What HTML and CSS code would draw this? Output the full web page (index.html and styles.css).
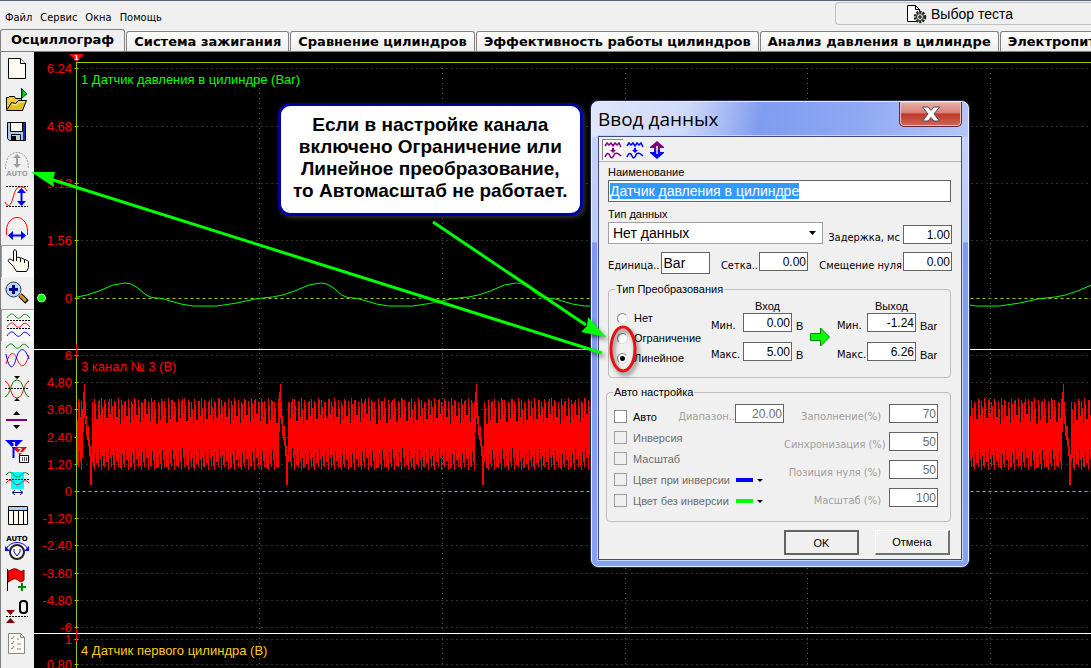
FILE: index.html
```html
<!DOCTYPE html>
<html lang="ru">
<head>
    <meta charset="UTF-8">
    <meta name="viewport" content="width=device-width, initial-scale=1.0">
    <title>Осциллограф</title>
    <link rel="stylesheet" href="styles.css">
</head>
<body>
    <header class="menubar">
        <nav class="menu">
            <a href="#">Файл</a>
            <a href="#">Сервис</a>
            <a href="#">Окна</a>
            <a href="#">Помощь</a>
        </nav>
        <button class="test-select" type="button">
            <svg width="22" height="20" viewBox="0 0 22 20">
                <path d="M1.500 1.500h8l4 4v12h-12z" fill="#fff" stroke="#000"/>
                <path d="M9.500 1.500v4h4" fill="none" stroke="#000"/>
                <circle cx="14" cy="13" r="5" fill="#b9cdb9" stroke="#222" stroke-width="2.500" stroke-dasharray="2 1.200"/>
                <circle cx="14" cy="13" r="3.500" fill="#cfe0cf" stroke="#333"/>
                <path d="M14 11v4M12 13h4" stroke="#000"/>
            </svg>
            <span>Выбор теста</span>
        </button>
    </header>

    <nav class="tabs">
        <a class="tab active" href="#">Осциллограф</a>
        <a class="tab" href="#">Система зажигания</a>
        <a class="tab" href="#">Сравнение цилиндров</a>
        <a class="tab" href="#">Эффективность работы цилиндров</a>
        <a class="tab" href="#">Анализ давления в цилиндре</a>
        <a class="tab" href="#">Электропитание</a>
    </nav>

    <main class="workspace">
        <div class="toolbar">
            <button type="button" aria-label="Новый">
                <svg viewBox="0 0 32 32"><path d="M7.500 5.500h12l5 5v15h-17z" fill="#fffaf0" stroke="#000"/><path d="M19.500 5.500v5h5" fill="#fff" stroke="#000"/></svg>
            </button>
            <button type="button" aria-label="Открыть">
                <svg viewBox="0 0 32 32"><path d="M5.500 24.500v-12h2l1-1h5l1 2h6v4" fill="#e8cf2a" stroke="#000"/><path d="M5.500 25.500l5-8 4 1 3-3h8l-4 10z" fill="#e0c020" stroke="#000"/><path d="M11 19l4 1 3-3h6" fill="none" stroke="#fff7a0"/><path d="M20.500 3v11" stroke="#000"/><path d="M21 4l5 5-5 4z" fill="#0c0" stroke="#063"/></svg>
            </button>
            <button type="button" aria-label="Сохранить">
                <svg viewBox="0 0 32 32"><path d="M6.500 5.500h18v18h-16l-2-2z" fill="#a8c8f0" stroke="#000"/><path d="M9.500 5.500h12v9h-12z" fill="#fffaf0" stroke="#000"/><path d="M22 6h2v17h-2z" fill="#22a"/><path d="M10.500 17.500h9v6h-9z" fill="#ccc" stroke="#000"/><path d="M11 19h4v4h-4z" fill="#000"/></svg>
            </button>
            <button type="button" aria-label="Автомасштаб">
                <svg viewBox="0 0 32 32"><g fill="none" stroke="#a0a0a0"><path d="M4.500 20C4.500 8 10 3.500 16 3.500S27.500 8 27.500 20" stroke-dasharray="2 1"/><path d="M16 7v10" stroke-width="2"/></g><path d="M12 9l4-4 4 4zM12 15l4 4 4-4z" fill="#a0a0a0"/><text x="16" y="27" class="mini gray">AUTO</text></svg>
            </button>
            <button type="button" aria-label="Масштаб по вертикали">
                <svg viewBox="0 0 32 32"><path d="M5 5.500h22M5 25.500h22" stroke="#000" stroke-dasharray="2 1"/><path d="M4 21c3 6 6 4 8-4s4-12 9-11c3 0 4 2 5 4" fill="none" stroke="red"/><path d="M20.500 9v14" stroke="#00f" stroke-width="2"/><path d="M16 12l4.500-5 4.500 5zM16 20l4.500 5 4.500-5z" fill="#00f"/></svg>
            </button>
            <button type="button" aria-label="Масштаб по горизонтали">
                <svg viewBox="0 0 32 32"><path d="M5.500 22V17C6 9 11 4.500 16 4.500S26 9 26.500 17v5" fill="none" stroke="red"/><path d="M9 22.500h15" stroke="#00f" stroke-width="2"/><path d="M12 18l-5 4.500 5 4.500zM20 18l5 4.500-5 4.500z" fill="#00f"/></svg>
            </button>
            <button type="button" class="pressed" aria-label="Рука">
                <svg viewBox="0 0 32 32"><path d="M12.500 16V7c0-3 3-3 3 0v6l1-1 3 1 1-0 3 1.500 1-0 3 2v6l-2 4h-10l-3-5-5-5c-1-2 1-3 3-2z" fill="#fffaf0" stroke="#000"/><path d="M15.500 13v3M19.500 13v4M23.500 15v3" stroke="#000"/></svg>
            </button>
            <button type="button" aria-label="Лупа">
                <svg viewBox="0 0 32 32"><path d="M19 18l7 7" stroke="#000" stroke-width="5"/><path d="M19 18l6 6" stroke="#d89a20" stroke-width="3"/><circle cx="12.500" cy="12.500" r="7.500" fill="#b8d8fa" stroke="#335"/><path d="M12.500 8v9M8 12.500h9" stroke="#000090" stroke-width="3"/></svg>
            </button>
            <button type="button" class="pressed" aria-label="Раздельно">
                <svg viewBox="0 0 32 32"><g fill="none"><path d="M6 9c3-5 6-5 8-2s5 3 7 0 5-2 8 2" stroke="#080"/><path d="M6 18c3-5 6-5 8-2s5 3 7 0 5-2 8 2" stroke="red"/><path d="M6 27c3-5 6-5 8-2s5 3 7 0 5-2 8 2" stroke="#00f"/><path d="M6 11.500h23M6 19.500h23" stroke="#000" stroke-dasharray="2 1"/></g></svg>
            </button>
            <button type="button" aria-label="Совместно">
                <svg viewBox="0 0 32 32"><g fill="none"><path d="M5 7c3-5 6-5 8-2s5 3 7 0 5-2 8 2" stroke="#080"/><path d="M5 23c3-10 7-15 11-5s8 9 12-4" stroke="red"/><path d="M5 13c3 16 7 16 10 5s8-14 13 0" stroke="#00f"/></g></svg>
            </button>
            <button type="button" aria-label="Инверсия">
                <svg viewBox="0 0 32 32"><g fill="none"><path d="M4 8c6 2 5 17 12 17S22 10 28 8" stroke="red"/><path d="M4 24c6-2 5-17 12-17s6 15 12 17" stroke="#080"/><path d="M4 15.500h24" stroke="#000" stroke-dasharray="2 1"/></g><path d="M13 3h6l-3 3zM13 28h6l-3-3z"/></svg>
            </button>
            <button type="button" aria-label="Смещение">
                <svg viewBox="0 0 32 32"><path d="M5 15h21" stroke="#800080" stroke-width="2"/><path d="M12 10h7l-3.500-4zM12 20h7l-3.500 4z"/></svg>
            </button>
            <button type="button" aria-label="Маркеры">
                <svg viewBox="0 0 32 32"><path d="M11 10h15l-7 8z" fill="red"/><path d="M18.500 16v6" stroke="red"/><path d="M4 3h18l-9 9z" fill="#00f"/><path d="M12.500 10v11" stroke="#00f" stroke-width="2"/><text x="13" y="10" class="mini white">1</text><text x="19" y="16" class="mini white">2</text><path d="M18.500 18.500h9v7h-9z" fill="#fff" stroke="#000"/><path d="M21.500 20v4M23.500 20v4M25.500 20v4" stroke="#555"/></svg>
            </button>
            <button type="button" aria-label="Интервал">
                <svg viewBox="0 0 32 32"><path d="M10 3h13v24H10z" fill="#0ff"/><g fill="none"><path d="M5 6c3-4 6-3 8 0s5 2 7 0 5-4 8 0" stroke="#080"/><path d="M5 14c3-4 6-3 8 0s5 2 7 0 5-4 8 0" stroke="red"/><path d="M5 10.500h23" stroke="#000" stroke-dasharray="2 1"/></g><path d="M10 20h13v7H10z" fill="#fff"/><path d="M12 23.500h9M14 21l-3 2.500 3 2.500M19 21l3 2.500-3 2.500" fill="none" stroke="#000090"/></svg>
            </button>
            <button type="button" aria-label="Таблица">
                <svg viewBox="0 0 32 32"><path d="M7.500 5.500h19v18h-19z" fill="#fffaf0" stroke="#000"/><path d="M8 6h18v3H8z" fill="#a8d0f8"/><path d="M7 9.500h20M12.500 9v15M17.500 9v15M22.500 9v15" stroke="#000"/></svg>
            </button>
            <button type="button" aria-label="Авто напряжение">
                <svg viewBox="0 0 32 32"><text x="16" y="8" class="mini">AUTO</text><path d="M5 17C8 7 24 7 27 17" fill="none" stroke="#00f"/><path d="M4 13v5h5zM28 13v5h-5z" fill="#00f"/><circle cx="16" cy="19" r="7" fill="#fffaf0" stroke="#222" stroke-width="2"/><path d="M13 16v3l3 4 3-4v-3" fill="none" stroke="#00f"/></svg>
            </button>
            <button type="button" aria-label="Добавить флаг">
                <svg viewBox="0 0 32 32"><path d="M6.500 4v22" stroke="#000"/><path d="M7 6c3 0 4-3 8-2s4 4 8 1v10c-4 4-5 0-8-1s-5 2-8 3z" fill="red" stroke="#600"/><path d="M21 18v8M17 22h8" stroke="#080" stroke-width="2"/></svg>
            </button>
            <button type="button" aria-label="Ноль">
                <svg viewBox="0 0 32 32"><rect x="19" y="4" width="7" height="12" rx="3" fill="none" stroke="#000" stroke-width="2"/><path d="M5 19.500h22" stroke="#000" stroke-dasharray="2 1"/><path d="M5 13h9l-4.500 5zM5 26h9l-4.500-5z" fill="#800000"/></svg>
            </button>
            <button type="button" aria-label="Отчёт">
                <svg viewBox="0 0 32 32"><path d="M7.500 4.500h12l4 4v16h-16z" fill="#fffaf0" stroke="#888"/><path d="M19.500 4.500v4h4M10 9l1 1 2-3M10 14l1 1 2-3M10 19l1 1 2-3M16 10h2M16 15h4M16 20h4" fill="none" stroke="#888"/></svg>
            </button>
        </div>

        <svg class="plot" id="plot"></svg>
    </main>

    <p class="callout">Если в настройке канала<br>включено Ограничение или<br>Линейное преобразование,<br>то Автомасштаб не работает.</p>

    <form class="dialog">
        <div class="titlebar">
            <h1>Ввод данных</h1>
            <button class="close" type="button" aria-label="Закрыть">
                <svg width="20" height="16" viewBox="0 0 20 16"><path d="M1.500 1h5.500l3 3.500L13 1h5.500l-5.500 7 5.500 7H13l-3-3.500L7 15H1.500L7 8z" fill="#fff" stroke="#4a4a55"/></svg>
            </button>
        </div>
        <div class="client">
            <div class="dialog-tools">
                <button type="button" class="pressed" aria-label="Огибающая">
                    <svg width="18" height="18" viewBox="0 0 18 18"><path d="M1 5l2-3 2 2 2-2 2 3 2-3 2 2 2-2 2 4M1 16c2-5 4-4 5-1s3 2 4-1 4-2 7 1" fill="none" stroke="#800080" stroke-width="1.500"/><path d="M9 7v2" stroke="#800080" stroke-width="2"/><path d="M6 9h6l-3 3z" fill="#800080"/></svg>
                </button>
                <button type="button" aria-label="Сглаживание">
                    <svg width="18" height="18" viewBox="0 0 18 18"><path d="M1 5l2-3 2 2 2-2 2 3 2-3 2 2 2-2 2 4M1 16c2-5 4-4 5-1s3 2 4-1 4-2 7 1" fill="none" stroke="#00f" stroke-width="1.500"/><path d="M9 7v2" stroke="#00f" stroke-width="2"/><path d="M6 9h6l-3 3z" fill="#00f"/></svg>
                </button>
                <button type="button" aria-label="Перевернуть">
                    <svg width="18" height="18" viewBox="0 0 18 18"><path d="M9 0l7 6v1h-4v2H6V7H2V6z" fill="#800080"/><path d="M9 18l7-6v-1h-4V9H6v2H2v1z" fill="#00f"/><path d="M9 5v8" stroke="#f0f0f0" stroke-width="1.500"/></svg>
                </button>
            </div>

            <div class="fields">
                <label for="name">Наименование</label>
                <input id="name" class="wide" type="text" value="Датчик давления в цилиндре">
                <label for="type">Тип данных</label>
                <div class="row">
                    <select id="type"><option>Нет данных</option></select>
                    <label class="push" for="delay">Задержка, мс</label>
                    <input id="delay" class="num" type="text" value="1.00">
                </div>
                <div class="row units">
                    <label for="unit">Единица..</label>
                    <input id="unit" class="unit" type="text" value="Bar">
                    <label class="push" for="grid">Сетка..</label>
                    <input id="grid" class="num" type="text" value="0.00">
                    <label class="push" for="zero">Смещение нуля</label>
                    <input id="zero" class="num" type="text" value="0.00">
                </div>
            </div>

            <fieldset class="convert">
                <legend>Тип Преобразования</legend>
                <div class="convert-body">
                    <div class="radios">
                        <label><input type="radio" name="conv">Нет</label>
                        <label><input type="radio" name="conv">Ограничение</label>
                        <label><input type="radio" name="conv" checked>Линейное</label>
                    </div>
                    <div class="ranges">
                        <span class="head in">Вход</span>
                        <span class="head out">Выход</span>
                        <label for="in-min">Мин.</label>
                        <input id="in-min" class="num" type="text" value="0.00">
                        <span class="measure">В</span>
                        <svg class="arrow" width="20" height="20" viewBox="0 0 20 20"><path d="M.5 6.500h10V1l9 9-9 9v-5.500H.5z" fill="#0f0" stroke="#080"/></svg>
                        <label for="out-min">Мин.</label>
                        <input id="out-min" class="num" type="text" value="-1.24">
                        <span class="measure">Bar</span>
                        <label for="in-max">Макс.</label>
                        <input id="in-max" class="num" type="text" value="5.00">
                        <span class="measure">В</span>
                        <label for="out-max">Макс.</label>
                        <input id="out-max" class="num" type="text" value="6.26">
                        <span class="measure">Bar</span>
                    </div>
                </div>
            </fieldset>

            <fieldset class="auto">
                <legend>Авто настройка</legend>
                <div class="auto-body">
                    <div class="checks">
                        <label><input type="checkbox">Авто</label>
                        <label class="off"><input type="checkbox" disabled>Инверсия</label>
                        <label class="off"><input type="checkbox" disabled>Масштаб</label>
                        <div class="color-row">
                            <label class="off"><input type="checkbox" disabled>Цвет при инверсии</label>
                            <button type="button" class="swatch" aria-label="Выбрать цвет при инверсии">
                                <svg width="28" height="12" viewBox="0 0 28 12"><path d="M0 4h17v4H0z" fill="#00f"/><path d="M21 5h6l-3 3z"/></svg>
                            </button>
                        </div>
                        <div class="color-row">
                            <label class="off"><input type="checkbox" disabled>Цвет без инверсии</label>
                            <button type="button" class="swatch" aria-label="Выбрать цвет без инверсии">
                                <svg width="28" height="12" viewBox="0 0 28 12"><path d="M0 4h17v4H0z" fill="#0f0"/><path d="M21 5h6l-3 3z"/></svg>
                            </button>
                        </div>
                    </div>
                    <div class="range">
                        <label for="range">Диапазон..</label>
                        <input id="range" class="num" type="text" value="20.00" disabled>
                    </div>
                    <div class="percents">
                        <label for="fill">Заполнение(%)</label>
                        <input id="fill" class="num" type="text" value="70" disabled>
                        <label for="sync">Синхронизация (%)</label>
                        <input id="sync" class="num" type="text" value="50" disabled>
                        <label for="zero-pos">Позиция нуля (%)</label>
                        <input id="zero-pos" class="num" type="text" value="50" disabled>
                        <label for="scale">Масштаб (%)</label>
                        <input id="scale" class="num" type="text" value="100" disabled>
                    </div>
                </div>
            </fieldset>

            <div class="actions">
                <button type="button" class="default">OK</button>
                <button type="button">Отмена</button>
            </div>
        </div>
    </form>

    <!-- arrows and the ring that point from the note to the settings -->
    <svg class="marks" width="640" height="400" viewBox="0 0 640 400">
        <g stroke="#0f0" stroke-width="3">
            <path d="M433 222L586 325"/>
            <path d="M602 353L50 179"/>
        </g>
        <path d="M606 337L581 332l6-6 1-9z" fill="#0f0"/>
        <path d="M31 172L55 172l-2 8 1 7z" fill="#0f0"/>
        <ellipse cx="623" cy="349" rx="12" ry="22" fill="none" stroke="#e81010" stroke-width="3"/>
    </svg>

    <script src="script.js"></script>
</body>
</html>
```
FILE: styles.css
```css
* {
    box-sizing: border-box;
}
body {
    margin: 0;
    height: 100vh;
    display: flex;
    flex-direction: column;
    overflow: hidden;
    background: #f0f0f0;
    color: #000;
    font-family: "DejaVu Sans Condensed", "DejaVu Sans", sans-serif;
    font-size: 11px;
}
button, input, select {
    font: inherit;
    color: inherit;
}
a {
    color: inherit;
    text-decoration: none;
}
.menubar {
    display: flex;
    justify-content: space-between;
    align-items: flex-start;
    height: 29px;
    flex: none;
    border-top: 1px solid #56657c;
}
.menu {
    display: flex;
    gap: 8px;
    padding: 10px 5px 0;
}
.test-select {
    display: flex;
    align-items: center;
    justify-content: center;
    gap: 3px;
    width: 256px;
    height: 23px;
    margin: 1px 0 0;
    padding: 0 8px 0 0;
    background: #f0f0f0;
    border: 1px solid #c0c0c0;
    border-right: none;
    border-radius: 4px 0 0 4px;
    font-family: "Liberation Sans", sans-serif;
    font-size: 14px;
}
.tabs {
    display: flex;
    align-items: flex-end;
    gap: 1px;
    height: 23px;
    flex: none;
    overflow: hidden;
    border-bottom: 1px solid #808080;
    font-family: "DejaVu Sans", sans-serif;
    font-size: 13px;
    font-weight: bold;
}
.tab {
    flex: none;
    height: 20px;
    padding: 0 7px;
    line-height: 20px;
    white-space: nowrap;
    background: linear-gradient(#fff, #eee);
    border: 1px solid #808080;
    border-bottom: none;
    border-radius: 3px 3px 0 0;
}
.tab.active {
    height: 22px;
    padding: 0 10px;
    background: #f0f0f0;
}
.workspace {
    display: flex;
    flex: 1;
    min-height: 0;
}
.toolbar {
    width: 34px;
    flex: none;
    padding-top: 1px;
    border-left: 1px solid #808080;
    overflow: hidden;
}
.toolbar button {
    display: block;
    width: 32px;
    height: 32px;
    padding: 0;
    border: none;
    background: none;
}
.toolbar svg {
    display: block;
    width: 32px;
    height: 32px;
}
.toolbar .pressed {
    background: #f8f8f8;
    box-shadow: inset 1px 1px #a0a0a0, inset -1px -1px #fff;
}
.mini {
    font-family: "DejaVu Sans", sans-serif;
    font-size: 7px;
    font-weight: bold;
    text-anchor: middle;
}
.gray {
    fill: #a0a0a0;
}
.white {
    fill: #fff;
}
.plot {
    flex: 1;
    min-width: 0;
    height: 100%;
    background: #000;
    font-family: "Liberation Sans", sans-serif;
    font-size: 13px;
}
.scale-text {
    fill: #f00;
    text-anchor: end;
}
.grid-line {
    stroke: #606060;
    stroke-dasharray: 1 4;
}
.zero-line {
    stroke: #99cc00;
    stroke-dasharray: 3 3;
}
.axis {
    stroke: #99cc00;
}

/* note over the plot */
.callout {
    position: absolute;
    left: 278px;
    top: 103px;
    margin: 0;
    padding: 8px 12px 11px;
    background: #fff;
    border: 3px solid #0000a0;
    border-radius: 12px;
    box-shadow: 2px 2px 5px #333;
    font: bold 19px/22px "Liberation Sans", sans-serif;
    text-align: center;
    white-space: nowrap;
}
.marks {
    position: absolute;
    left: 0;
    top: 0;
    pointer-events: none;
    filter: drop-shadow(2px 3px 2px rgba(0, 0, 0, 0.5));
}

/* dialog window */
.dialog {
    position: absolute;
    left: 591px;
    top: 101px;
    width: 378px;
    padding: 0 6px 6px;
    background:
        linear-gradient(100deg, #dfe6fb 0%, #cfdafa 25%, #809cf0 45%, #8fa8f3 70%, #b5c6f8 100%) no-repeat 0 0 / 100% 35px,
        linear-gradient(#c8d6fa, #b8c8f8 140px, #7d9af0 141px, #86a2f4);
    border: 1px solid #e6ecff;
    border-radius: 7px;
    box-shadow: 0 0 0 1px #222c44;
}
.titlebar {
    display: flex;
    justify-content: space-between;
    align-items: flex-start;
    height: 34px;
}
.titlebar h1 {
    margin: 0;
    font: 19px/34px "Open Sans", sans-serif;
}
.close {
    display: flex;
    align-items: center;
    justify-content: center;
    width: 63px;
    height: 25px;
    padding: 0;
    border: 1px solid #5a2a35;
    border-top: none;
    border-radius: 0 0 5px 5px;
    background: linear-gradient(#eab0a8, #d88078 45%, #c03828 50%, #d06858);
    box-shadow: inset 0 0 0 1px #f0c0b8;
}
.client {
    background: #f0f0f0;
    border: 1px solid #3c4c80;
    padding-bottom: 4px;
    box-shadow: 0 0 0 1px #c8d6ff;
}
.client label, .head, .measure {
    white-space: nowrap;
}
.dialog-tools {
    display: flex;
    gap: 1px;
    height: 25px;
    padding: 2px 3px;
    border-bottom: 1px solid #b8b8b8;
}
.dialog-tools button {
    display: flex;
    align-items: center;
    justify-content: center;
    width: 21px;
    height: 21px;
    padding: 0;
    border: none;
    background: none;
}
.dialog-tools .pressed {
    background: #fafafa;
    box-shadow: inset 1px 1px #888;
}
.fields {
    display: flex;
    flex-direction: column;
    padding: 3px 9px 0;
}
.fields > label, legend, .radios, .checks, .head, .measure {
    font-family: "Liberation Sans", sans-serif;
    font-size: 11px;
}
.fields > label {
    line-height: 15px;
}
.client input[type="text"] {
    background: #fff;
    border: 1px solid #646464;
    border-radius: 0;
    outline: none;
    font-family: "Liberation Sans", sans-serif;
}
.wide {
    height: 22px;
    padding: 0 1px;
    margin: 0 1px 5px 0;
    font-size: 14px;
}
.wide::selection {
    background: #3399ff;
    color: #fff;
}
.unit {
    width: 49px;
    height: 22px;
    margin: 0;
    padding: 0 2px;
    font-size: 14px;
}
.num {
    width: 49px;
    height: 19px;
    margin: 0;
    padding: 0 1px;
    font-size: 12px;
    text-align: right;
}
.num:disabled {
    color: #6d6d6d;
}
.row {
    display: flex;
    align-items: flex-end;
    gap: 3px;
}
.row .push {
    margin-left: auto;
}
.units {
    align-items: flex-start;
    gap: 1px;
    margin-top: 8px;
}
.units label {
    line-height: 27px;
}
select {
    width: 215px;
    height: 22px;
    padding: 0 4px;
    appearance: none;
    border: 1px solid #a0a0a0;
    border-radius: 0;
    background: #fff url("data:image/svg+xml,%3Csvg xmlns='http://www.w3.org/2000/svg' width='7' height='4'%3E%3Cpath d='M0 0h7L3.5 4z'/%3E%3C/svg%3E") no-repeat right 6px center;
    font-family: "Liberation Sans", sans-serif;
    font-size: 14px;
}
fieldset {
    margin: 0;
    padding: 0;
    border: 1px solid #bcbcbc;
    border-radius: 4px;
    min-width: 0;
}
legend {
    margin-left: 6px;
    padding: 0 1px;
    line-height: 14px;
}
.convert {
    height: 96px;
    margin: 3px 10px 0 9px;
}
.convert-body {
    display: flex;
    padding-top: 1px;
}
.radios {
    width: 102px;
    flex: none;
    padding: 11px 0 0 8px;
}
.radios label, .checks label {
    display: flex;
    align-items: center;
    gap: 6px;
}
.radios label {
    height: 20px;
}
.radios input {
    appearance: none;
    width: 11px;
    height: 11px;
    margin: 0;
    background: #fff;
    border: 1px solid #808080;
    border-right-color: #ddd;
    border-bottom-color: #ddd;
    border-radius: 50%;
}
.radios input:checked {
    background: radial-gradient(circle, #000 2px, #fff 3px);
}
.ranges {
    display: grid;
    grid-template-columns: 32px 49px 18px 27px 30px 49px 26px;
    grid-template-rows: 16px 29px 29px;
    align-items: start;
}
.head {
    padding-top: 2px;
    line-height: 14px;
    text-align: center;
}
.in {
    grid-column: 2;
}
.out {
    grid-column: 6 / 8;
    width: 49px;
}
.ranges label, .measure {
    line-height: 26px;
}
.measure {
    padding-left: 4px;
}
.arrow {
    grid-area: 2 / 4 / 4 / 5;
    margin-top: 14px;
}
.auto {
    height: 137px;
    margin: 7px 10px 0 7px;
}
.auto-body {
    display: flex;
    align-items: flex-start;
    padding-right: 12px;
}
.checks {
    width: 66px;
    flex: none;
    padding: 7px 0 0 7px;
}
.checks label {
    height: 21px;
}
.checks input {
    appearance: none;
    width: 13px;
    height: 13px;
    flex: none;
    margin: 0;
    background: #fff;
    border: 1px solid #8c8c8c;
}
.checks input:disabled {
    background: #f0f0f0;
    border-color: #a0a0a0;
}
.off {
    color: #6d6d6d;
}
.color-row {
    display: flex;
    align-items: center;
    width: 150px;
    justify-content: space-between;
}
.swatch {
    display: block;
    height: 12px;
    padding: 0;
    border: none;
    background: none;
}
.swatch svg {
    display: block;
}
.range {
    display: flex;
    flex: none;
    color: #a0a0a0;
    justify-content: flex-end;
    width: 111px;
}
.range label, .percents label {
    line-height: 26px;
    text-align: right;
}
.percents {
    display: grid;
    grid-template-columns: 97px 49px;
    grid-auto-rows: 28px;
    column-gap: 8px;
    align-items: start;
    color: #a0a0a0;
}
.range, .percents {
    padding-top: 5px;
}
.actions {
    display: flex;
    justify-content: flex-end;
    gap: 16px;
    padding: 8px 11px 0;
}
.actions button {
    width: 75px;
    height: 25px;
    padding: 0;
    background: #f0f0f0;
    border: 1px solid #fff;
    border-right: 2px solid #707070;
    border-bottom: 2px solid #707070;
    font-family: "Liberation Sans", sans-serif;
    font-size: 11px;
}
.actions .default {
    border: 2px solid #646464;
}
```
FILE: script.js
```javascript
const NS = 'http://www.w3.org/2000/svg';
const plot = document.getElementById('plot');
const width = plot.clientWidth;
const height = plot.clientHeight;
const axisX = 42.5;

function add(tag, attrs, text) {
    const el = document.createElementNS(NS, tag);
    for (const key in attrs) el.setAttribute(key, attrs[key]);
    if (text) el.textContent = text;
    plot.appendChild(el);
}

function line(x1, y1, x2, y2, cls) {
    add('line', { x1, y1, x2, y2, class: cls });
}

// scale marks: [label, y]
const scales = [
    ['6.24', 16.5], ['4.68', 74.5], ['3.12', 131.5], ['1.56', 188.5], ['0', 246.5],
    ['6', 303.5], ['4.80', 330.5], ['3.60', 357.5], ['2.40', 385.5], ['1.20', 412.5], ['0', 439.5],
    ['-1.20', 466.5], ['-2.40', 493.5], ['-3.60', 521.5], ['-4.80', 548.5], ['-6', 575.5],
    ['1', 587.5], ['0.80', 612.5]
];

scales.forEach(([label, y]) => {
    line(axisX, y, width, y, label === '0' ? 'zero-line' : 'grid-line');
    line(axisX - 2, y, axisX + 2, y, 'axis');
    add('text', { x: 38, y: y + 4.5, class: 'scale-text' }, label);
});
for (let x = 225.5; x < width; x += 182.75) {
    line(Math.floor(x) + 0.5, 16, Math.floor(x) + 0.5, height, 'grid-line');
}
line(axisX, 10.5, width, 10.5, 'axis');
line(axisX, 10, axisX, height, 'axis');

// channel 1: cylinder pressure
const cycle = [[0, 245], [10, 243], [22, 239], [36, 233], [48, 231], [54, 232], [61, 236], [69, 243], [75, 245.5], [85, 246.5],
    [104, 252], [116, 254], [140, 254], [160, 251], [178, 247], [190, 245.5]];
let pressure = [];
for (let start = 43; start < width; start += 195.7) {
    cycle.forEach(([dx, y]) => pressure.push((start + dx) + ',' + y));
}
add('polyline', { points: pressure.join(' '), fill: 'none', stroke: '#00ff00' });

// channel 3: noisy signal with one spike for each cycle, [top, bottom] by column
const spike = {
    6: [340, 380], 7: [332, 366], 8: [350, 372], 9: [364, 384], 10: [374, 388], 11: [374, 394], 12: [386, 404],
    13: [394, 433], 14: [402, 433], 15: [350, 410]
};
let noise = [];
for (let x = 43; x < width; x++) {
    const phase = Math.floor((x - 43) % 195.7);
    const n = Math.floor(x * 3 / 10);
    const step = Math.floor(x - n * 10 / 3);
    const drift = (n * 7) % 11;
    let top = 346 + (n * 7) % 5;
    let bottom = 418 - (n * 3) % 6;
    if (step === 1) {
        top = 347 + drift;
        bottom = 396 + drift;
    } else if (step >= 2) {
        top = 362 + drift;
        bottom = 406 + drift;
    }
    if (spike[phase]) {
        [top, bottom] = spike[phase];
    }
    noise.push('M' + (x + 0.5) + ' ' + top.toFixed(0) + 'V' + bottom.toFixed(0));
}
add('path', { d: noise.join(''), stroke: '#ff0000', fill: 'none' });

// borders between channels
[297.5, 581.5].forEach(y => {
    add('line', { x1: 0, y1: y, x2: width, y2: y, stroke: '#fff' });
    add('line', { x1: axisX, y1: y - 5, x2: axisX, y2: y + 8, stroke: 'red' });
});

add('text', { x: 47, y: 32, fill: '#00ff00' }, '1 Датчик давления в цилиндре (Bar)');
add('text', { x: 47, y: 319, fill: '#ff0000' }, '3 канал № 3 (В)');
add('text', { x: 47, y: 603, fill: '#ffcc00' }, '4 Датчик первого цилиндра (В)');

add('path', { d: 'M35 2h15l-7.5 8z', fill: 'red' });
add('text', { x: 42.5, y: 8, class: 'mini white' }, '1');
add('circle', { cx: 7.5, cy: 246, r: 4, fill: '#00ff00', stroke: '#b0ffb0' });

document.getElementById('name').focus();
document.getElementById('name').select();
```
